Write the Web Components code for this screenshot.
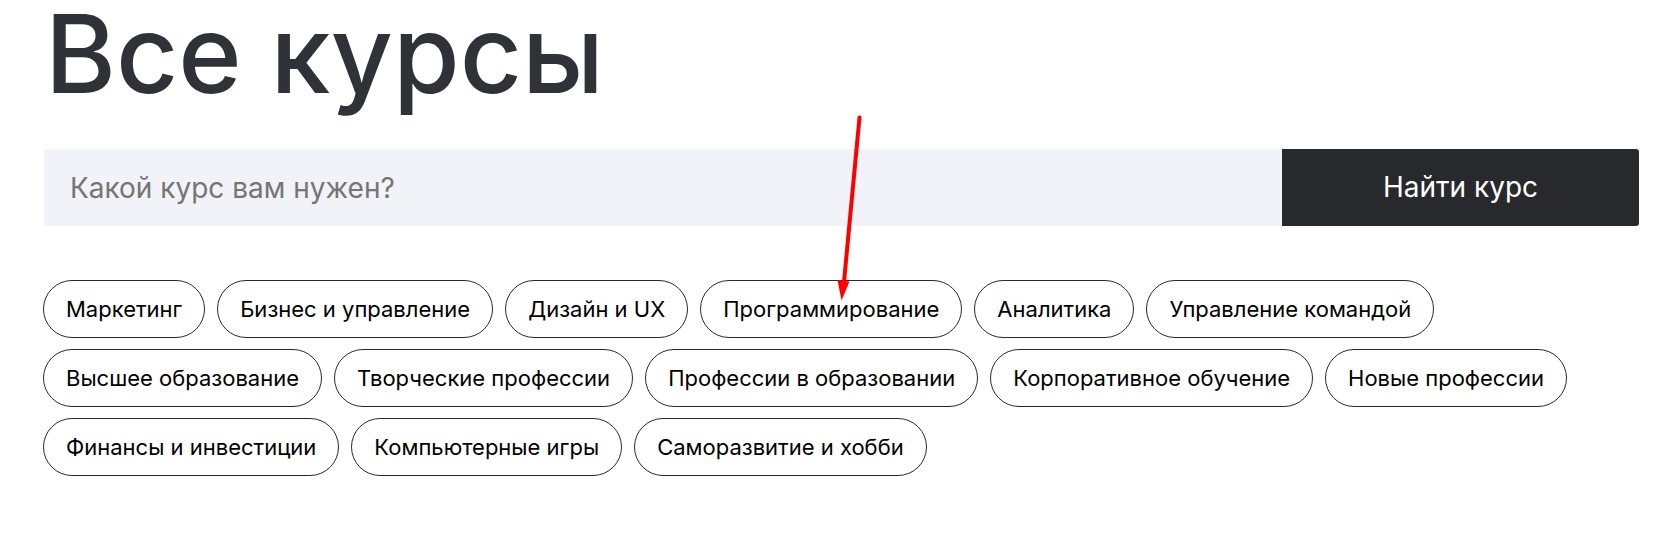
<!DOCTYPE html>
<html lang="ru">
<head>
<meta charset="utf-8">
<meta name="viewport" content="width=device-width, initial-scale=1">
<title>Все курсы</title>
<style>
  body { margin: 0; background: #fff; font-family: Inter, "Noto Sans", sans-serif; color: #000; }
</style>
</head>
<body>
<courses-page>
  <page-title slot="title">Все курсы</page-title>
  <course-search slot="search" placeholder="Какой курс вам нужен?">Найти курс</course-search>
  <topic-list slot="topics">
    <topic-chip>Маркетинг</topic-chip>
    <topic-chip>Бизнес и управление</topic-chip>
    <topic-chip>Дизайн и UX</topic-chip>
    <topic-chip>Программирование</topic-chip>
    <topic-chip>Аналитика</topic-chip>
    <topic-chip>Управление командой</topic-chip>
    <topic-chip>Высшее образование</topic-chip>
    <topic-chip>Творческие профессии</topic-chip>
    <topic-chip>Профессии в образовании</topic-chip>
    <topic-chip>Корпоративное обучение</topic-chip>
    <topic-chip>Новые профессии</topic-chip>
    <topic-chip>Финансы и инвестиции</topic-chip>
    <topic-chip>Компьютерные игры</topic-chip>
    <topic-chip>Саморазвитие и хобби</topic-chip>
  </topic-list>
  <pointer-arrow slot="overlay"></pointer-arrow>
</courses-page>
<script>
  function define(name, html, setup) {
    const template = document.createElement('template');
    template.innerHTML = html;
    customElements.define(name, class extends HTMLElement {
      constructor() {
        super();
        this.attachShadow({ mode: 'open' }).append(template.content.cloneNode(true));
      }
      connectedCallback() {
        if (setup) setup(this, this.shadowRoot);
      }
    });
  }

  define('courses-page', `
    <style>
      :host { display: block; position: relative; }
      main { display: flex; flex-direction: column; padding: 0 23px 32px 44px; }
      .topics { margin-top: 54px; }
    </style>
    <main>
      <slot name="title"></slot>
      <slot name="search"></slot>
      <div class="topics"><slot name="topics"></slot></div>
    </main>
    <slot name="overlay"></slot>
  `);

  define('page-title', `
    <style>
      :host { display: block; padding: 0 0 41px 1px; }
      h1 { margin: 0; font-size: 108px; line-height: 108px; font-weight: 500; color: #2f3237; }
    </style>
    <h1><slot></slot></h1>
  `);

  define('course-search', `
    <style>
      :host { display: block; }
      form { display: grid; grid-template-columns: 1238fr 357fr; border-radius: 3px; overflow: hidden; }
      input, button { box-sizing: border-box; min-width: 0; margin: 0; border: 0; border-radius: 0;
        padding: 22px 26px; font: 28px/33px Inter, "Noto Sans", sans-serif; }
      input { height: 77px; background: #f2f3f8; color: #000; outline: none; }
      input::placeholder { color: #757575; opacity: 1; }
      button { background: #28292d; color: #fff; cursor: pointer; }
    </style>
    <form role="search">
      <input type="search" name="q">
      <button type="button"><slot></slot></button>
    </form>
  `, (host, root) => {
    const input = root.querySelector('input');
    input.placeholder = host.getAttribute('placeholder');
    input.setAttribute('aria-label', input.placeholder);
  });

  define('topic-list', `
    <style>
      :host { display: flex; flex-wrap: wrap; gap: 11px 12px; margin-left: -1px; }
    </style>
    <slot></slot>
  `);

  define('topic-chip', `
    <style>
      :host { display: block; }
      a { display: block; padding: 14px 22px; border: 1px solid #28292d; border-radius: 29px;
        font-size: 22px; line-height: 28px; color: #000; text-decoration: none; white-space: nowrap; }
    </style>
    <a href="#"><slot></slot></a>
  `);

  define('pointer-arrow', `
    <style>
      :host { display: block; position: absolute; left: 836px; top: 114px; pointer-events: none; }
      svg { display: block; }
    </style>
    <svg width="28" height="188" viewBox="0 0 28 188" aria-hidden="true">
      <path d="M23.500 3.500 L8 168" stroke="#f00" stroke-width="4" stroke-linecap="round"/>
      <path d="M1.500 166 L13.500 167.500 L5.500 186.500 Z" fill="#f00"/>
    </svg>
  `);
</script>
</body>
</html>
